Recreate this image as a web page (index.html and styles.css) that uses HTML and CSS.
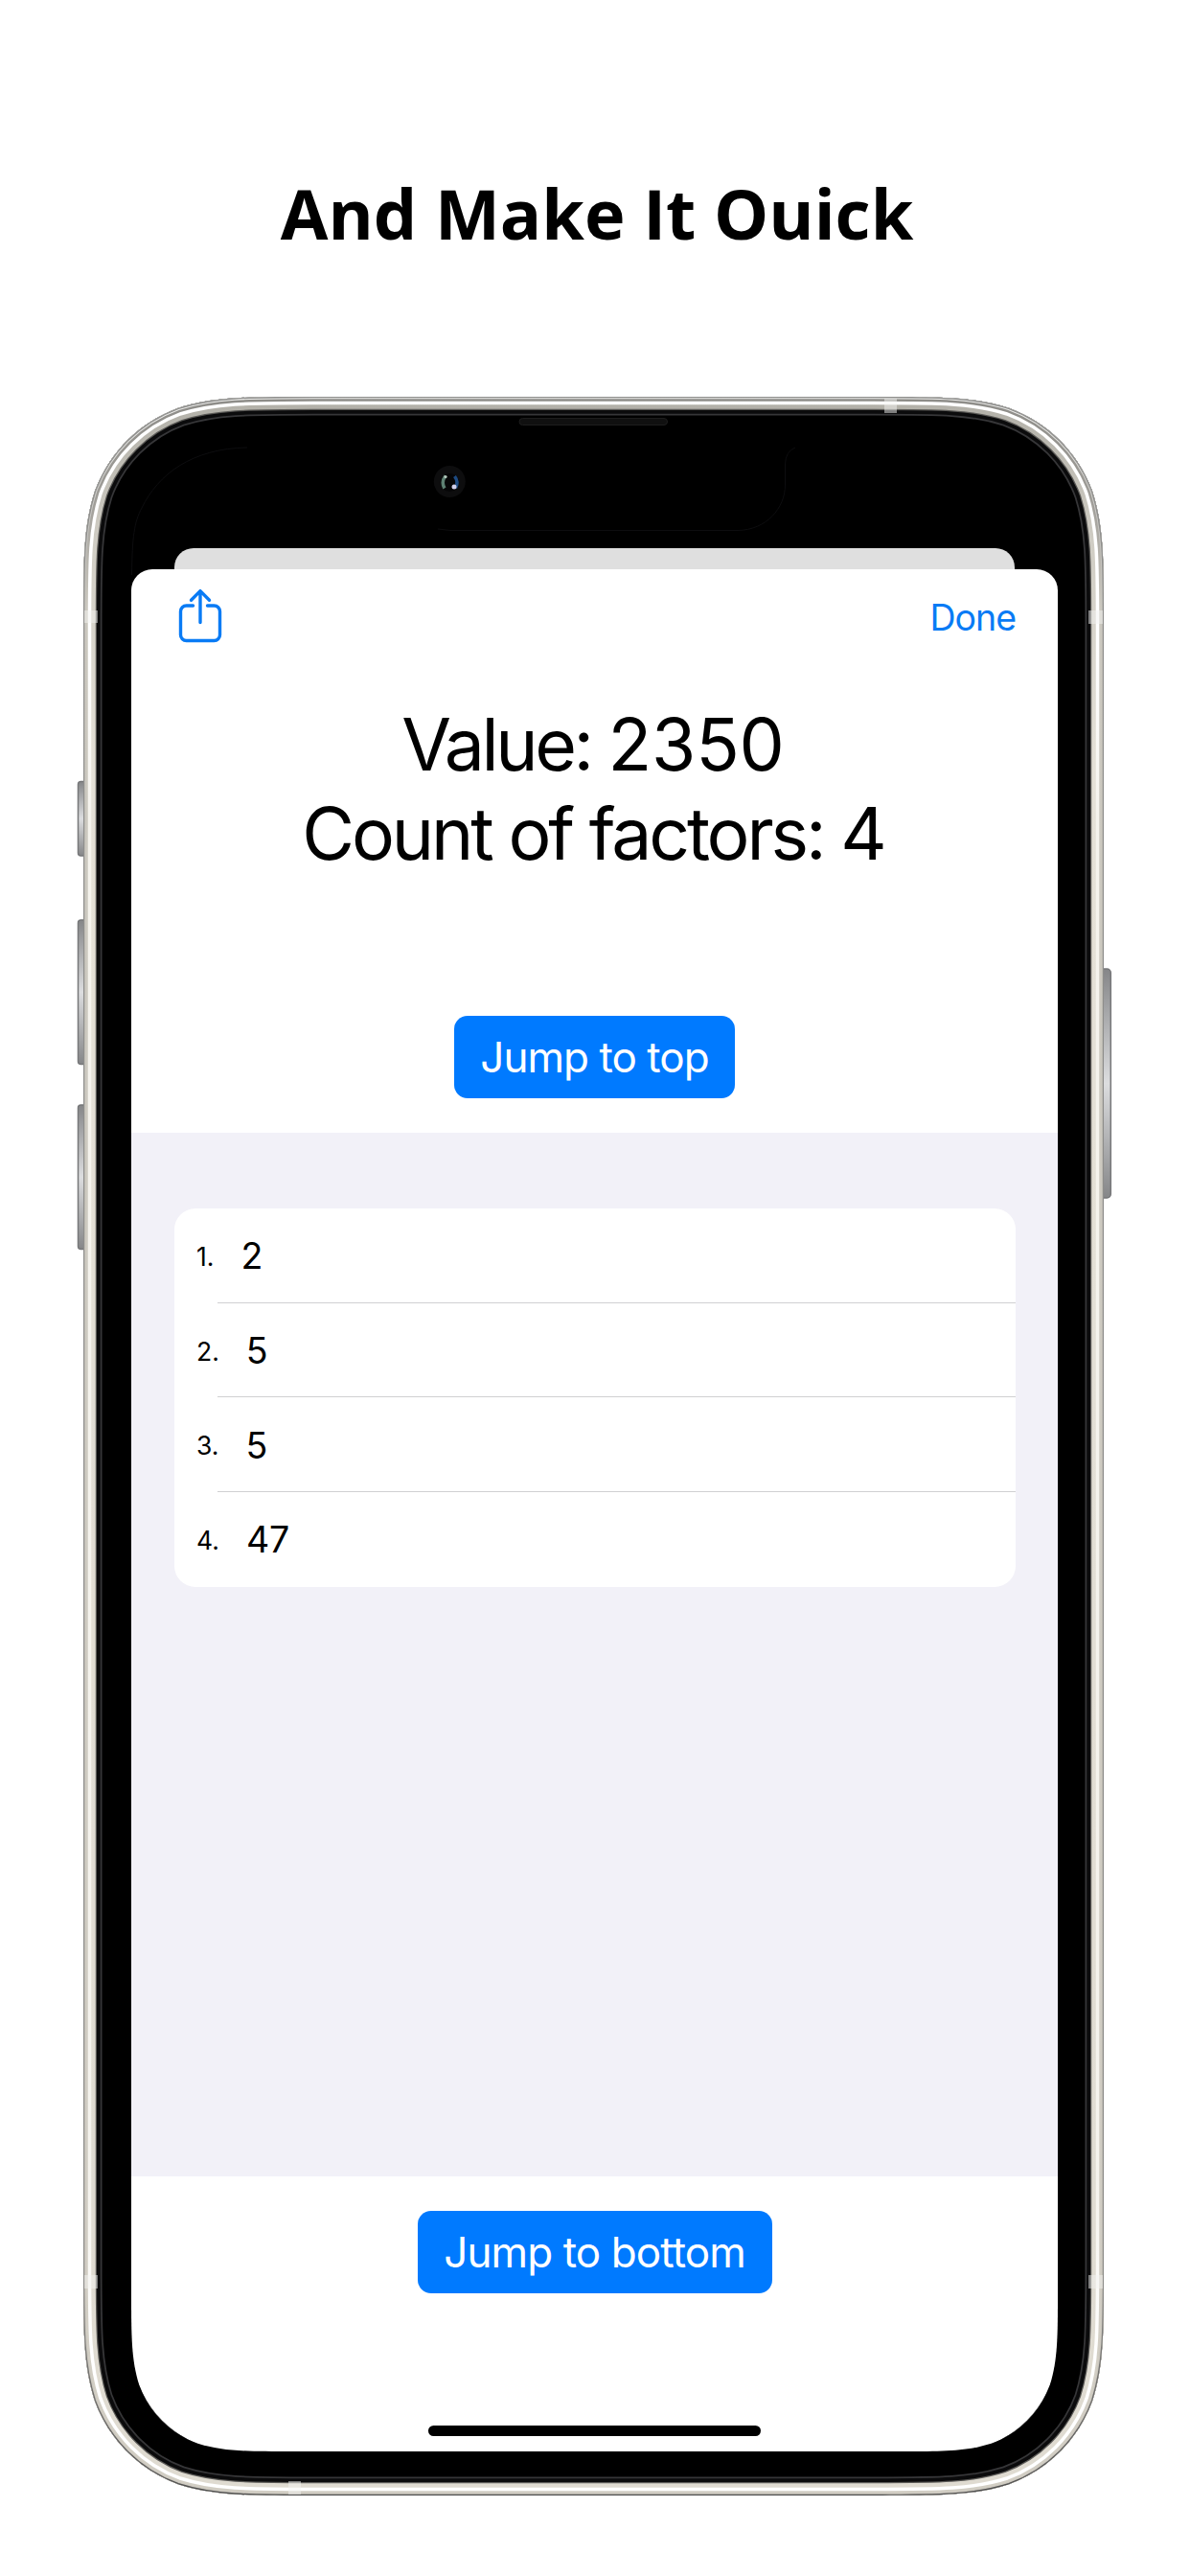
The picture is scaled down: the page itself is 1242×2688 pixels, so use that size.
FILE: index.html
```html
<!DOCTYPE html>
<html lang="en">
<head>
<meta charset="utf-8">
<title>And Make It Ouick</title>
<link rel="stylesheet" href="styles.css">
</head>
<body>
<main class="poster">
  <h1 class="headline">And Make It Ouick</h1>
  <div class="phone">
    <div class="screen">
      <div class="back-card"></div>
      <section class="sheet">
        <header class="toolbar">
          <svg class="share" viewBox="0 0 46 60" aria-label="Share">
            <path d="M15.5 18H8.500a6 6 0 0 0-6 6v24.500a6 6 0 0 0 6 6h29a6 6 0 0 0 6-6V24a6 6 0 0 0-6-6H30.500"/>
            <path d="M23 35.500V3M13.500 12.200L23 2.600l9.500 9.600"/>
          </svg>
          <span class="done">Done</span>
        </header>
        <div class="summary">
          <p class="value">Value: <span class="digits">2350</span></p>
          <p class="count">Count of factors: 4</p>
        </div>
        <div class="top-action"><button class="button button-top">Jump to top</button></div>
        <div class="list-area">
          <ol class="factors">
            <li class="row"><span class="index">1.</span><span class="factor">2</span></li>
            <li class="row"><span class="index">2.</span><span class="factor">5</span></li>
            <li class="row"><span class="index">3.</span><span class="factor">5</span></li>
            <li class="row"><span class="index">4.</span><span class="factor">47</span></li>
          </ol>
        </div>
        <footer class="bottom-action">
          <button class="button button-bottom">Jump to bottom</button>
          <div class="home-indicator"></div>
        </footer>
      </section>
    </div>
    <svg class="frame" viewBox="80 414 1082 2190" aria-hidden="true">
      <defs>
        <path id="body" d="M87 654C87 585 87 550.3 98.800 513.100C113.500 472.500 145.500 440.500 186 425.800C223.300 414 258 414 327 414H912C981 414 1015.700 414 1053 425.800C1093.500 440.500 1125.500 472.500 1140.200 513.100C1152 550.300 1152 585 1152 654V2364C1152 2433 1152 2467.700 1140.200 2504.900C1125.500 2545.500 1093.500 2577.500 1053 2592.200C1015.700 2604 981 2604 912 2604H327C258 2604 223.300 2604 186 2592.200C145.500 2577.500 113.500 2545.500 98.800 2504.900C87 2467.700 87 2433 87 2364Z"/>
        <path id="glass" d="M137 634C137 586 137 561.500 145.200 535.500C155.600 507 178 484.600 206.500 474.200C232.500 466 257 466 305 466H936C984 466 1008.500 466 1034.500 474.200C1063 484.600 1085.400 507 1095.800 535.500C1104 561.500 1104 586 1104 634V2390C1104 2438 1104 2462.500 1095.800 2488.500C1085.400 2517 1063 2539.400 1034.500 2549.800C1008.500 2558 984 2558 936 2558H305C257 2558 232.500 2558 206.500 2549.800C178 2539.400 155.600 2517 145.200 2488.500C137 2462.500 137 2438 137 2390Z"/>
        <clipPath id="bodyClip"><use href="#body"/></clipPath>
        <mask id="bezelMask" maskUnits="userSpaceOnUse" x="80" y="414" width="1082" height="2190">
          <use href="#body" fill="#fff"/><use href="#glass" fill="#000"/>
        </mask>
        <linearGradient id="edge" gradientUnits="userSpaceOnUse" x1="0" y1="414" x2="0" y2="2604">
          <stop offset="0" stop-color="#8f8f8d"/><stop offset=".9" stop-color="#8c8b88"/><stop offset="1" stop-color="#4e4e4e"/>
        </linearGradient>
        <linearGradient id="glint" gradientUnits="userSpaceOnUse" x1="0" y1="414" x2="0" y2="2604">
          <stop offset="0" stop-color="#eeeeec"/><stop offset=".06" stop-color="#c4c3bf"/><stop offset=".12" stop-color="#c8c5bd"/><stop offset="1" stop-color="#cbc7be"/>
        </linearGradient>
        <linearGradient id="rim" gradientUnits="userSpaceOnUse" x1="0" y1="414" x2="0" y2="2604">
          <stop offset="0" stop-color="#8d8c88"/><stop offset=".05" stop-color="#a09e99"/><stop offset=".1" stop-color="#cbc8bf"/><stop offset="1" stop-color="#d2cec4"/>
        </linearGradient>
        <linearGradient id="shine" gradientUnits="userSpaceOnUse" x1="0" y1="414" x2="0" y2="2604">
          <stop offset="0" stop-color="#fff"/><stop offset=".12" stop-color="#fff"/><stop offset=".2" stop-color="#f5f3ed"/><stop offset=".85" stop-color="#f5f3ed"/><stop offset=".94" stop-color="#fff"/>
        </linearGradient>
        <linearGradient id="metal" gradientUnits="userSpaceOnUse" x1="0" y1="414" x2="0" y2="2604">
          <stop offset="0" stop-color="#b1afa7"/><stop offset=".07" stop-color="#d0cdc4"/><stop offset=".18" stop-color="#e5e1d7"/><stop offset="1" stop-color="#dfdbd1"/>
        </linearGradient>
        <linearGradient id="key" x1="0" y1="0" x2="0" y2="1">
          <stop offset="0" stop-color="#858688"/><stop offset=".5" stop-color="#dcdddf"/><stop offset="1" stop-color="#858688"/>
        </linearGradient>
      </defs>
      <g fill="url(#key)" stroke="#77787a" stroke-width="1.500">
        <rect x="81.500" y="815.500" width="12" height="77.500" rx="3"/>
        <rect x="81.500" y="960" width="12" height="150.500" rx="3"/>
        <rect x="81.500" y="1153" width="12" height="150.500" rx="3"/>
        <rect x="1146" y="1011" width="13.300" height="239" rx="4"/>
      </g>
      <use href="#body" fill="#000" mask="url(#bezelMask)"/>
      <g fill="none" clip-path="url(#bodyClip)">
        <use href="#body" stroke="#363638" stroke-width="39"/>
        <use href="#body" stroke="#0b0b0c" stroke-width="35.500"/>
        <use href="#body" stroke="#5b5a57" stroke-width="28"/>
        <use href="#body" stroke="url(#metal)" stroke-width="25.500"/>
        <use href="#body" stroke="url(#shine)" stroke-width="16.500"/>
        <use href="#body" stroke="url(#rim)" stroke-width="9.500"/>
        <use href="#body" stroke="url(#glint)" stroke-width="4.500"/>
        <use href="#body" stroke="url(#edge)" stroke-width="2.400"/>
      </g>
      <g fill="#f4f4f2" fill-opacity=".5">
        <rect x="88" y="637" width="14" height="13"/><rect x="1136" y="637" width="15" height="14"/>
        <rect x="88" y="2374" width="14" height="14"/><rect x="1136" y="2374" width="15" height="14"/>
        <rect x="923" y="416" width="13" height="15"/><rect x="301" y="2589" width="13" height="14"/>
      </g>
      <path d="M137.500 600C138 560 140 545 148 530C165 495 200 468 258 467M457 552L470 553.500H770C800 553 819.500 530 819.500 506V484Q820 471 830 467" fill="none" stroke="#0d0d0f"/>
      <rect x="542" y="436.500" width="154.500" height="7" rx="3.500" fill="#101010" stroke="#1d1d1d"/>
      <circle cx="469.300" cy="502.500" r="16.500" fill="#0d0d0e"/>
      <circle cx="469.300" cy="503.500" r="9.500" fill="#060607"/>
      <path d="M465 496.500q-5 6.500-1 13" fill="none" stroke="#5d8072" stroke-width="3.500"/>
      <path d="M474.500 497q4.500 6 1 12" fill="none" stroke="#1e4b82" stroke-width="3.500"/>
      <circle cx="474" cy="508" r="2.500" fill="#d2d0ea"/>
      <circle cx="465" cy="497.500" r="1.600" fill="#b6c9bd"/>
    </svg>
  </div>
</main>
</body>
</html>
```
FILE: styles.css
```css
* { box-sizing: border-box; }

body {
  margin: 0;
  background: #fff;
  color: #000;
  font-family: Inter, "Liberation Sans", sans-serif;
}

.poster {
  width: 1242px;
  height: 2688px;
  overflow: hidden;
  display: flex;
  flex-direction: column;
  align-items: center;
}

.headline {
  height: 414px;
  margin: 0;
  padding: 173px 0 0 4px;
  font: bold 72px/98px "Open Sans", "Noto Sans", sans-serif;
  white-space: nowrap;
}

.phone {
  position: relative;
  width: 1082px;
  height: 2190px;
  padding: 52px 58px 46px 57px;
}

.screen {
  display: flex;
  flex-direction: column;
  height: 2092px;
  padding-top: 106px;
  background: #000;
  border-radius: 100px 100px 110px 110px;
  overflow: hidden;
}

.frame {
  position: absolute;
  inset: 0;
  width: 100%;
  height: 100%;
}

.back-card {
  height: 22px;
  margin: 0 45px;
  background: #dfdfdf;
  border-radius: 20px 20px 0 0;
}

.sheet {
  flex: 1;
  display: flex;
  flex-direction: column;
  background: #fff;
  border-radius: 22px 22px 0 0;
}

.toolbar {
  display: flex;
  justify-content: space-between;
  height: 114px;
  padding: 20px 44px 0 49px;
}

.share {
  width: 46px;
  height: 60px;
  fill: none;
  stroke: #097bf5;
  stroke-width: 3.4;
  stroke-linecap: round;
  stroke-linejoin: round;
}

.done {
  font-size: 37.5px;
  line-height: 61px;
  letter-spacing: -1px;
  color: #097bf5;
}

.summary {
  height: 352px;
  padding-top: 23px;
  text-align: center;
}

.value, .count {
  margin: 0;
  padding-right: 3px;
  font-size: 75px;
  line-height: 92.500px;
  white-space: nowrap;
}

.value { letter-spacing: -3.4px; }
.count { letter-spacing: -3.15px; }
.digits { letter-spacing: -.2px; }

.top-action {
  display: flex;
  justify-content: center;
  height: 122px;
}

.button {
  height: 86px;
  padding: 0;
  border: 0;
  border-radius: 14px;
  background: #007aff;
  color: #fff;
  font: 400 44px/86px Inter, sans-serif;
  white-space: nowrap;
}

.button-top { width: 293px; letter-spacing: -.95px; }
.button-bottom { width: 370px; letter-spacing: -.9px; }

.list-area {
  height: 1089px;
  padding: 79px 44px 0 45px;
  background: #f2f1f8;
}

.factors {
  margin: 0;
  padding: 0;
  list-style: none;
  background: #fff;
  border-radius: 22px;
}

.row {
  position: relative;
  display: flex;
  align-items: center;
  gap: 28px;
  height: 98.700px;
  padding: 1px 0 0 23px;
}

.row + .row::before {
  content: "";
  position: absolute;
  top: -1px;
  left: 45px;
  right: 0;
  height: 1px;
  background: #d0d0d2;
}

.index { font-size: 26.500px; }
.factor { font-size: 37.500px; }

.bottom-action {
  display: flex;
  flex-direction: column;
  align-items: center;
  padding-top: 36px;
}

.home-indicator {
  width: 347px;
  height: 11px;
  margin-top: 138px;
  border-radius: 6px;
  background: #000;
}
```
